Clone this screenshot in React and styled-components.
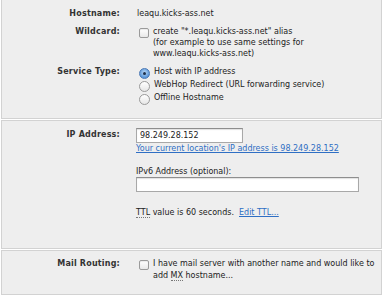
import styled, { createGlobalStyle } from 'styled-components';

const GlobalStyle = createGlobalStyle`
  html, body {
    margin: 0;
    padding: 0;
    background: #ffffff;
  }
  body {
    font-family: "DejaVu Sans", "Liberation Sans", sans-serif;
    font-size: 8px;
    color: #222;
  }
`;

const Page = styled.div`
  width: 383px;
  height: 300px;
  overflow: hidden;
`;

const Panel = styled.div`
  margin: 0 1px 1px 1px;
  border: 1px solid #d2d2d2;
  background: #eeeeee;
  padding: ${(props) => props.$pad || '7px 0 13px 0'};
  &:first-child {
    border-top: none;
  }
`;

const Row = styled.div`
  display: grid;
  grid-template-columns: 118px 1fr;
  column-gap: 16px;
  line-height: 11px;
  & + & {
    margin-top: 7px;
  }
`;

const Label = styled.div`
  text-align: right;
  font-weight: bold;
  color: #333;
  letter-spacing: 0.2px;
  padding-top: ${(props) => props.$top || '0'};
`;

const Value = styled.div`
  padding-left: 1px;
`;

const Option = styled.label`
  display: flex;
  align-items: flex-start;
  gap: 4px;
  padding-left: 3px;
  line-height: ${(props) => props.$lh || '11px'};
`;

const Box = styled.span`
  flex: none;
  width: 8px;
  height: 8px;
  margin-top: 2px;
  border: 1px solid #9a9a9a;
  border-radius: 2px;
  background: linear-gradient(#ffffff, #e8e8e8);
  box-shadow: inset 0 1px 1px rgba(0, 0, 0, 0.08);
`;

const Radio = styled.span`
  flex: none;
  position: relative;
  width: 9px;
  height: 9px;
  margin-top: 2px;
  border: 1px solid ${(props) => (props.$on ? '#4a78b5' : '#9a9a9a')};
  border-radius: 50%;
  background: ${(props) =>
    props.$on
      ? 'radial-gradient(circle at 50% 40%, #bcd8f5, #5b97d9 70%)'
      : 'linear-gradient(#ffffff, #e6e6e6)'};
  &::after {
    content: '';
    display: ${(props) => (props.$on ? 'block' : 'none')};
    position: absolute;
    left: 3px;
    top: 3px;
    width: 3px;
    height: 3px;
    border-radius: 50%;
    background: #1d2f4a;
  }
`;

const RadioList = styled.div`
  display: flex;
  flex-direction: column;
`;

const Input = styled.input`
  display: block;
  box-sizing: border-box;
  width: ${(props) => props.$w};
  height: 15px;
  margin: 0;
  padding: 0 3px;
  border: 1px solid #a8a8a8;
  border-top-color: #8e8e8e;
  background: #ffffff;
  box-shadow: inset 0 1px 1px rgba(0, 0, 0, 0.12);
  font-family: "DejaVu Sans", "Liberation Sans", sans-serif;
  font-size: 8px;
  color: #222;
  outline: none;
`;

const Link = styled.a`
  color: #2f6fc4;
  text-decoration: underline;
  cursor: pointer;
`;

const Block = styled.div`
  display: flex;
  flex-direction: column;
  margin-top: ${(props) => props.$mt || '0'};
`;

const Abbr = styled.abbr`
  text-decoration: none;
  border-bottom: 1px dotted #777;
`;

const Field = styled.div`
  line-height: 11px;
`;

export default function App() {
  return (
    <Page>
      <GlobalStyle />
      <Panel $pad="8px 0 13px 0">
        <Row>
          <Label>Hostname:</Label>
          <Value>leaqu.kicks-ass.net</Value>
        </Row>
        <Row>
          <Label>Wildcard:</Label>
          <Option>
            <Box />
            <span>
              create "*.leaqu.kicks-ass.net" alias
              <br />
              (for example to use same settings for
              <br />
              www.leaqu.kicks-ass.net)
            </span>
          </Option>
        </Row>
        <Row>
          <Label>Service Type:</Label>
          <RadioList>
            <Option $lh="12.5px">
              <Radio $on />
              <span>Host with IP address</span>
            </Option>
            <Option $lh="12.5px">
              <Radio />
              <span>WebHop Redirect (URL forwarding service)</span>
            </Option>
            <Option $lh="12.5px">
              <Radio />
              <span>Offline Hostname</span>
            </Option>
          </RadioList>
        </Row>
      </Panel>

      <Panel $pad="7px 0 30px 0">
        <Row>
          <Label $top="1px">IP Address:</Label>
          <Block>
            <Input $w="107px" defaultValue="98.249.28.152" />
            <Field>
              <Link>Your current location's IP address is 98.249.28.152</Link>
            </Field>
            <Block $mt="12px">
              <Field>IPv6 Address (optional):</Field>
              <Input $w="223px" defaultValue="" />
            </Block>
            <Block $mt="15px">
              <Field>
                <Abbr>TTL</Abbr> value is 60 seconds.&nbsp;&nbsp;<Link>Edit TTL...</Link>
              </Field>
            </Block>
          </Block>
        </Row>
      </Panel>

      <Panel $pad="7px 0 13px 0">
        <Row>
          <Label>Mail Routing:</Label>
          <Option $lh="11.5px">
            <Box />
            <span>
              I have mail server with another name and would like to
              <br />
              add <Abbr>MX</Abbr> hostname...
            </span>
          </Option>
        </Row>
      </Panel>
    </Page>
  );
}
